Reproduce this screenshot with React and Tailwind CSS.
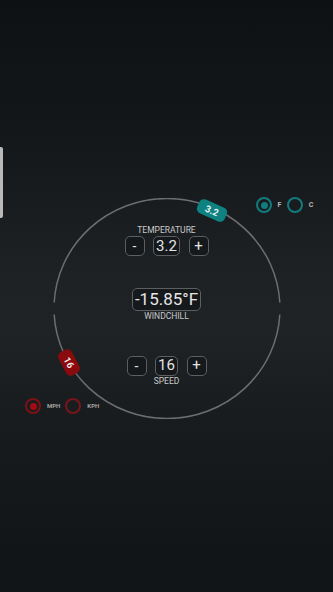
import React from "react";

function Radio({ color, dot, checked }) {
  return (
    <div
      className={`flex h-[16px] w-[16px] items-center justify-center rounded-full border-2 ${color}`}
    >
      {checked ? <div className={`h-[7px] w-[7px] rounded-full ${dot}`} /> : null}
    </div>
  );
}

function Box({ children, w, text = "text-[15px]" }) {
  return (
    <div
      className={`flex h-[20px] items-center justify-center rounded-[5px] border-[1.5px] border-[#5c5f61] bg-[#16191c] ${w} ${text} leading-none text-[#e4e4e4]`}
    >
      {children}
    </div>
  );
}

export default function App() {
  return (
    <div className="relative h-[592px] w-full overflow-hidden bg-[linear-gradient(180deg,#0d1114_0%,#14181b_25%,#1d2124_45%,#1f2326_55%,#161a1d_75%,#101417_100%)] font-['Roboto','Liberation_Sans',sans-serif]">
      <div className="absolute left-0 top-[147px] h-[71px] w-[3px] rounded-r-[2px] bg-[#b9b9b9]" />

      <div className="pt-[198px]">
        <div className="relative mx-auto h-[221px] w-[228px]">
          <svg
            className="absolute inset-0"
            width="228"
            height="221"
            viewBox="0 0 228 221"
            fill="none"
          >
            <path
              d="M 1.17 104.5 A 113 110 0 0 1 226.83 104.5"
              stroke="#6e6e6e"
              strokeWidth="1.5"
            />
            <path
              d="M 226.83 116.5 A 113 110 0 0 1 1.17 116.5"
              stroke="#6e6e6e"
              strokeWidth="1.5"
            />
          </svg>

          {/* value badges on the dial */}
          <div className="absolute left-[144.5px] top-[4.5px] flex h-[15px] w-[30px] rotate-[24deg] items-center justify-center rounded-[5px] bg-[#0e8181] text-[9.5px] font-bold leading-none text-[#e8f4f4]">
            3.2
          </div>
          <div className="absolute left-[3px] top-[156.5px] flex h-[15px] w-[26px] rotate-[62deg] items-center justify-center rounded-[5px] bg-[#890b0d] text-[9.5px] font-bold leading-none text-[#f4e6e6]">
            16
          </div>

          {/* unit toggles */}
          <div className="absolute left-[203.5px] top-[-1px] flex items-center">
            <Radio color="border-[#127b7d]" dot="bg-[#127b7d]" checked />
            <span className="ml-[5.5px] text-[7px] font-bold leading-none text-[#b9b9b9]">
              F
            </span>
            <div className="ml-[6px]">
              <Radio color="border-[#127b7d]" dot="bg-[#127b7d]" />
            </div>
            <span className="ml-[5.5px] text-[7px] font-bold leading-none text-[#b9b9b9]">
              C
            </span>
          </div>

          <div className="absolute left-[-27.5px] top-[200px] flex items-center">
            <Radio color="border-[#7c1216]" dot="bg-[#a30d12]" checked />
            <span className="ml-[6px] text-[6px] font-bold leading-none text-[#a3a3a3]">
              MPH
            </span>
            <div className="ml-[5px]">
              <Radio color="border-[#7a1519]" dot="bg-[#a30d12]" />
            </div>
            <span className="ml-[6px] text-[6px] font-bold leading-none text-[#a3a3a3]">
              KPH
            </span>
          </div>

          {/* dial content */}
          <div className="relative flex flex-col items-center pt-[27px]">
            <div className="h-[10px] text-[8.5px] leading-[10px] text-[#c9c9c9]">
              TEMPERATURE
            </div>
            <div className="mt-[1px] flex items-center gap-[8.5px]">
              <Box w="w-[20px]" text="text-[14px]">-</Box>
              <Box w="w-[27px]">3.2</Box>
              <Box w="w-[20px]" text="text-[15px]">+</Box>
            </div>

            <div className="mt-[32px] flex h-[23px] w-[69px] items-center justify-center rounded-[5px] border-[1.5px] border-[#5c5f61] bg-[#16191c] text-[17px] leading-none text-[#e6e6e6]">
              -15.85°F
            </div>
            <div className="h-[10px] text-[8.5px] leading-[10px] text-[#c9c9c9]">
              WINDCHILL
            </div>

            <div className="mt-[34.5px] flex items-center gap-[8.5px]">
              <Box w="w-[20px]" text="text-[14px]">-</Box>
              <Box w="w-[23px]">16</Box>
              <Box w="w-[20px]" text="text-[15px]">+</Box>
            </div>
            <div className="h-[10px] text-[8.5px] leading-[10px] text-[#c9c9c9]">
              SPEED
            </div>
          </div>
        </div>
      </div>
    </div>
  );
}
